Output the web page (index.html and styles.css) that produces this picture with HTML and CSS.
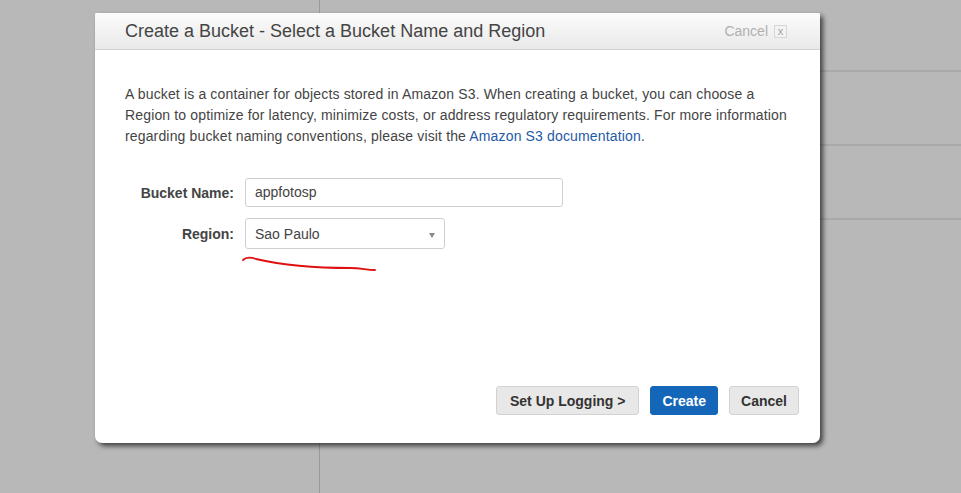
FILE: index.html
```html
<!DOCTYPE html>
<html>
<head>
<meta charset="utf-8">
<link rel="stylesheet" href="styles.css">
</head>
<body>
<div class="backdrop">
  <div class="bg-left"></div>
  <div class="bg-right">
    <div class="bg-row r1"></div>
    <div class="bg-row r2"></div>
    <div class="bg-row r3"></div>
    <div class="bg-row r4"></div>
  </div>
</div>

<div class="dialog">
  <div class="dialog-header">
    <h1 class="dialog-title">Create a Bucket - Select a Bucket Name and Region</h1>
    <span class="header-cancel">Cancel <span class="close-box">x</span></span>
  </div>
  <div class="dialog-body">
    <p class="intro">A bucket is a container for objects stored in Amazon S3. When creating a bucket, you can choose a Region to optimize for latency, minimize costs, or address regulatory requirements. For more information regarding bucket naming conventions, please visit the <a class="doc-link" href="#">Amazon S3 documentation</a>.</p>
    <div class="form">
      <label class="form-label">Bucket Name:</label>
      <div class="text-input">appfotosp</div>
      <label class="form-label">Region:</label>
      <div class="select-wrap">
        <div class="select">
          <span>Sao Paulo</span>
          <span class="caret"></span>
        </div>
        <svg class="scribble" width="140" height="20" viewBox="0 0 140 20">
          <path d="M1 8 C 4 5, 8 5, 14 7 C 40 13, 70 16, 108 16 C 120 16, 124 18, 133 18" fill="none" stroke="#e01010" stroke-width="1.8" stroke-linecap="round"/>
        </svg>
      </div>
    </div>
    <div class="actions">
      <button class="btn logging">Set Up Logging &gt;</button>
      <button class="btn primary">Create</button>
      <button class="btn">Cancel</button>
    </div>
  </div>
</div>
</body>
</html>
```

FILE: styles.css
```css
* { box-sizing: border-box; }
html, body { margin: 0; padding: 0; }
body {
  width: 961px;
  height: 493px;
  background: #b8b8b8;
  font-family: "Liberation Sans", Arial, sans-serif;
  overflow: hidden;
  position: relative;
}
.backdrop {
  display: flex;
  height: 493px;
}
.bg-left {
  width: 320px;
  border-right: 1px solid #9a9a9a;
}
.bg-right {
  flex: 1;
  display: flex;
  flex-direction: column;
}
.bg-row { border-bottom: 2px solid #a9a9a9; }
.r1 { height: 72px; }
.r2 { height: 74px; }
.r3 { height: 74px; }
.r4 { border-bottom: none; }

.dialog {
  position: absolute;
  left: 95px;
  top: 13px;
  width: 725px;
  height: 430px;
  background: #fff;
  border-radius: 2px 2px 7px 7px;
  box-shadow: 3px 3px 5px rgba(0,0,0,0.65);
  display: flex;
  flex-direction: column;
}
.dialog-header {
  height: 37px;
  background: linear-gradient(#fbfbfb, #e9e9e9);
  border-bottom: 1px solid #d2d2d2;
  border-radius: 2px 2px 0 0;
  display: flex;
  align-items: center;
  justify-content: space-between;
  padding: 0 33px 0 30px;
}
.dialog-title {
  margin: 0;
  font-size: 18px;
  font-weight: normal;
  color: #444;
  padding-top: 1px;
}
.header-cancel {
  font-size: 14px;
  color: #b0b0b0;
  display: flex;
  align-items: center;
  gap: 6px;
}
.close-box {
  display: inline-flex;
  align-items: center;
  justify-content: center;
  width: 13px;
  height: 13px;
  border: 1px solid #d6d6d6;
  font-size: 11px;
  line-height: 1;
  color: #a0a0a0;
  background: #f3f3f3;
}
.dialog-body {
  flex: 1;
  display: flex;
  flex-direction: column;
  padding: 34px 21px 28px 30px;
}
.intro {
  margin: 0;
  width: 665px;
  font-size: 14px;
  line-height: 21px;
  letter-spacing: 0.15px;
  color: #444;
}
.doc-link { color: #1f5aa8; text-decoration: none; }

.form {
  display: grid;
  grid-template-columns: 109px auto;
  column-gap: 11px;
  row-gap: 11px;
  align-items: center;
  justify-items: start;
  margin-top: 31px;
}
.form-label {
  justify-self: end;
  font-size: 14px;
  font-weight: bold;
  color: #444;
}
.text-input {
  width: 318px;
  height: 29px;
  border: 1px solid #cfcfcf;
  border-radius: 3px;
  padding: 0 9px;
  font-size: 14px;
  line-height: 27px;
  color: #444;
}
.select-wrap { position: relative; }
.select {
  width: 200px;
  height: 31px;
  border: 1px solid #cfcfcf;
  border-radius: 3px;
  padding: 0 9px;
  font-size: 14px;
  color: #444;
  display: flex;
  align-items: center;
  justify-content: space-between;
}
.caret {
  width: 0;
  height: 0;
  border-left: 3px solid transparent;
  border-right: 3px solid transparent;
  border-top: 5px solid #8a8a8a;
  margin-top: 3px;
}
.scribble {
  position: absolute;
  left: -3px;
  top: 34px;
}
.actions {
  margin-top: auto;
  display: flex;
  justify-content: flex-end;
  gap: 11px;
}
.btn {
  height: 29px;
  padding: 0 11px;
  border: 1px solid #d3d3d3;
  border-radius: 3px;
  background: #e8e8e8;
  font-family: "Liberation Sans", Arial, sans-serif;
  font-size: 14px;
  font-weight: bold;
  color: #333;
}
.btn.logging { padding: 0 13px; }
.btn.primary {
  background: #1466b8;
  border-color: #1466b8;
  color: #fff;
  padding: 0 11px;
}
```
